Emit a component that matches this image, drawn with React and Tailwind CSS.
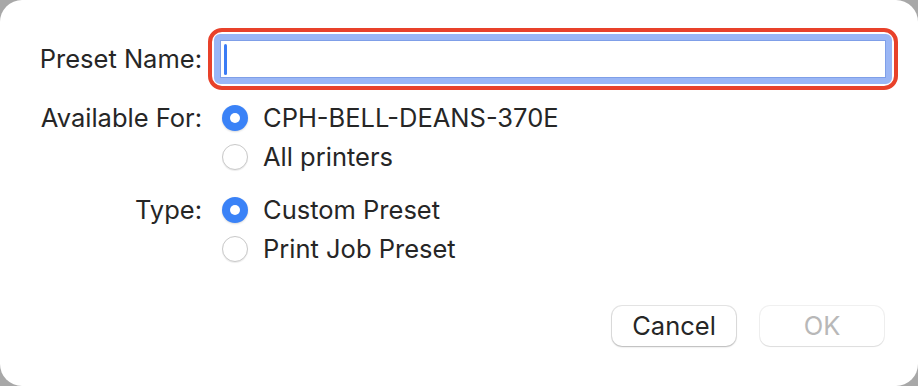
import React from "react";

function Radio({ checked }) {
  if (checked) {
    return (
      <span className="flex h-[26px] w-[26px] shrink-0 items-center justify-center rounded-full bg-[#3a82f7] shadow-[0_1px_2px_rgba(0,0,0,0.15)]">
        <span className="h-[10px] w-[10px] rounded-full bg-white" />
      </span>
    );
  }
  return (
    <span className="h-[26px] w-[26px] shrink-0 rounded-full border border-[#c9c9c9] bg-white shadow-[0_1px_1px_rgba(0,0,0,0.08)]" />
  );
}

function Option({ checked, label }) {
  return (
    <div className="flex h-[39px] items-center gap-[15px]">
      <Radio checked={checked} />
      <span>{label}</span>
    </div>
  );
}

export default function App() {
  return (
    <div className="h-[386px] w-[918px] bg-[#a8a8a8]">
      <div
        className="flex h-full w-full flex-col rounded-[22px] bg-white text-[25.5px] leading-none text-[#262626]"
        style={{ fontFamily: "Inter, 'Helvetica Neue', Arial, sans-serif" }}
      >
        <div className="grid grid-cols-[202px_1fr] pt-[28px]">
          <div className="flex items-center justify-end">Preset Name:</div>
          <div className="ml-[6px] mr-[20px] rounded-[14px] border-[4px] border-[#e8412a] p-[2px]">
            <div className="rounded-[6px] border-[6px] border-[#9ab6f5] bg-white shadow-[inset_0_0_0_1px_#7f9fe8]">
              <div className="flex h-[38px] items-center pl-[4px]">
                <span className="h-[31px] w-[3px] rounded-full bg-[#3b7cf5]" />
              </div>
            </div>
          </div>
        </div>

        <div className="mt-[8px] grid grid-cols-[202px_1fr]">
          <div className="flex h-[39px] items-center justify-end">Available For:</div>
          <div className="ml-[20px] flex flex-col">
            <Option checked label="CPH-BELL-DEANS-370E" />
            <Option label="All printers" />
          </div>
        </div>

        <div className="mt-[14px] grid grid-cols-[202px_1fr]">
          <div className="flex h-[39px] items-center justify-end">Type:</div>
          <div className="ml-[20px] flex flex-col">
            <Option checked label="Custom Preset" />
            <Option label="Print Job Preset" />
          </div>
        </div>

        <div className="mt-[38px] flex justify-end gap-[24px] pr-[34px]">
          <button className="flex h-[40px] w-[124px] items-center justify-center rounded-[10px] bg-white text-[#262626] shadow-[0_0_0_1px_rgba(0,0,0,0.1),0_1px_2px_rgba(0,0,0,0.2)]">
            Cancel
          </button>
          <button className="flex h-[40px] w-[124px] items-center justify-center rounded-[10px] bg-white text-[#b8b8b8] shadow-[0_0_0_1px_rgba(0,0,0,0.06),0_1px_1px_rgba(0,0,0,0.08)]">
            OK
          </button>
        </div>
      </div>
    </div>
  );
}
